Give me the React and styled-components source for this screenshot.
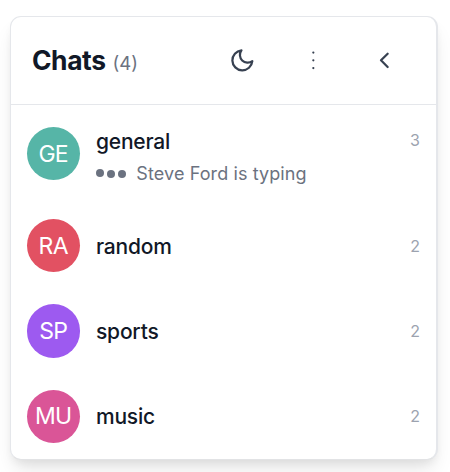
import React from 'react';
import styled, { createGlobalStyle } from 'styled-components';

const GlobalStyle = createGlobalStyle`
  * { box-sizing: border-box; }
  body { margin: 0; background: #fff; font-family: Inter, "Liberation Sans", sans-serif; -webkit-font-smoothing: antialiased; }
`;

const Page = styled.main`
  height: 472px;
  padding: 16px 12px 12px 10px;
  overflow: hidden;
`;

const Card = styled.section`
  height: 444px;
  border: 1px solid #e5e7eb;
  border-right-width: 2px;
  border-bottom-color: #e2e3e5;
  border-radius: 11px;
  background: #fff;
  box-shadow: 0 13px 20px -4px rgba(0, 0, 0, 0.1), 0 5px 8px -2px rgba(0, 0, 0, 0.06);
`;

const Header = styled.header`
  display: flex;
  align-items: center;
  justify-content: space-between;
  height: 88px;
  padding: 0 38px 0 21px;
  border-bottom: 1px solid #e5e7eb;
`;

const Title = styled.h1`
  margin: 2px 0 0;
  display: flex;
  align-items: baseline;
  gap: 7px;
  color: #111827;
  font-size: 26.4px;
  line-height: 36px;
  font-weight: 700;
  letter-spacing: -0.4px;
`;

const Total = styled.span`
  color: #6b7280;
  font-size: 18.5px;
  font-weight: 400;
  letter-spacing: 0;
`;

const Actions = styled.div`
  display: flex;
  gap: 44.4px;
`;

const IconButton = styled.button`
  display: flex;
  padding: 0;
  border: 0;
  background: none;
  color: #374151;
  cursor: pointer;

  svg {
    width: 26.67px;
    height: 26.67px;
    fill: none;
    stroke: currentColor;
    stroke-width: 2;
    stroke-linecap: round;
    stroke-linejoin: round;
  }
`;

const List = styled.ul`
  margin: 0;
  padding: 5px 16px 0;
  list-style: none;
`;

const Row = styled.li`
  display: flex;
  align-items: center;
  height: ${({ $tall }) => ($tall ? '87.5px' : '85.4px')};
  ${({ $tall }) => $tall && 'margin-bottom: 5.5px;'}
`;

const Avatar = styled.div`
  display: flex;
  align-items: center;
  justify-content: center;
  flex: none;
  width: 53.4px;
  height: 53.4px;
  border-radius: 50%;
  background: ${({ $color }) => $color};
  color: #fff;
  font-size: 23px;
  letter-spacing: -0.7px;
  padding-right: 1px;
`;

const Body = styled.div`
  flex: 1;
  margin-left: 15.6px;
  padding-top: ${({ $tall }) => ($tall ? '8px' : '1px')};
`;

const Line = styled.div`
  display: flex;
  align-items: center;
  justify-content: space-between;
  height: 32px;
`;

const Name = styled.span`
  color: #111827;
  font-size: 21px;
  font-weight: 500;
  letter-spacing: -0.2px;
`;

const Count = styled.span`
  color: #9ca3af;
  font-size: 16px;
  margin-bottom: ${({ $raised }) => ($raised ? '3px' : '1px')};
`;

const Typing = styled.div`
  display: flex;
  align-items: center;
  height: 32px;
  color: #6b7280;
  font-size: 18px;
  letter-spacing: 0.1px;
`;

const Dots = styled.span`
  display: flex;
  gap: 2.4px;
  margin-right: 10.4px;
`;

const Dot = styled.i`
  width: 8.4px;
  height: 8.4px;
  border-radius: 50%;
  background: #6b7280;
  transform: translateY(${({ $shift }) => $shift}px);
`;

const chats = [
  { initials: 'GE', name: 'general', count: 3, color: '#56b5a7', typing: 'Steve Ford is typing' },
  { initials: 'RA', name: 'random', count: 2, color: '#e25162' },
  { initials: 'SP', name: 'sports', count: 2, color: '#9d5af0' },
  { initials: 'MU', name: 'music', count: 2, color: '#da5597' },
];

export default function App() {
  return (
    <Page>
      <GlobalStyle />
      <Card>
        <Header>
          <Title>Chats <Total>(4)</Total></Title>
          <Actions>
            <IconButton aria-label="Dark mode">
              <svg viewBox="0 0 24 24"><path d="M21 12.79A9 9 0 1 1 11.21 3 7 7 0 0 0 21 12.79z" /></svg>
            </IconButton>
            <IconButton aria-label="Options">
              <svg viewBox="0 0 24 24"><path d="M12 5v.01M12 12v.01M12 19v.01" /></svg>
            </IconButton>
            <IconButton aria-label="Collapse">
              <svg viewBox="0 0 24 24"><path d="M15 18l-6-6 6-6" /></svg>
            </IconButton>
          </Actions>
        </Header>
        <List>
          {chats.map((chat) => (
            <Row key={chat.name} $tall={!!chat.typing}>
              <Avatar $color={chat.color}>{chat.initials}</Avatar>
              <Body $tall={!!chat.typing}>
                <Line>
                  <Name>{chat.name}</Name>
                  <Count $raised={!!chat.typing}>{chat.count}</Count>
                </Line>
                {chat.typing && (
                  <Typing>
                    <Dots><Dot $shift={-1} /><Dot $shift={0} /><Dot $shift={0} /></Dots>
                    {chat.typing}
                  </Typing>
                )}
              </Body>
            </Row>
          ))}
        </List>
      </Card>
    </Page>
  );
}
